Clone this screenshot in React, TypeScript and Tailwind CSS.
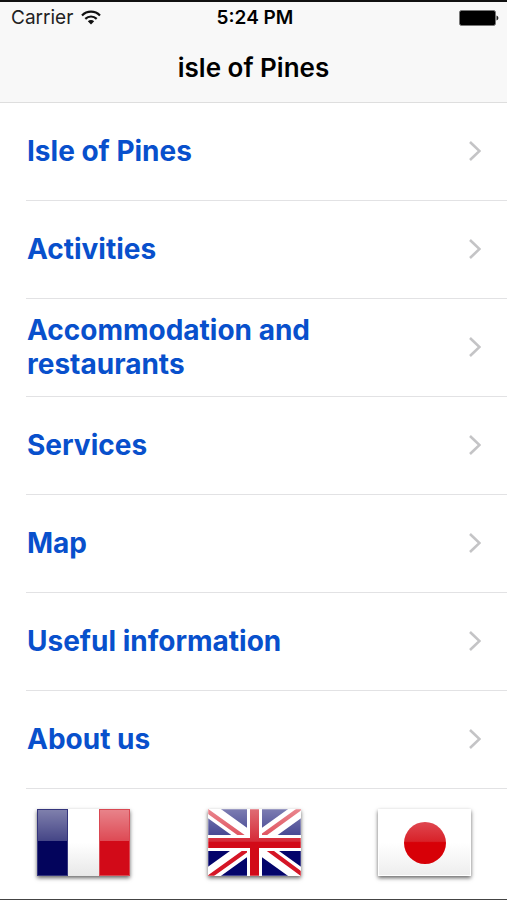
import React from "react";

const items = [
  "Isle of Pines",
  "Activities",
  "Accommodation and restaurants",
  "Services",
  "Map",
  "Useful information",
  "About us",
];

function WifiIcon() {
  return (
    <svg className="h-4 w-5" viewBox="0 0 20 16" fill="none" stroke="#111" strokeWidth="2.2" aria-hidden="true">
      <path d="M1 5.400C6 .3 14 .3 19 5.400" />
      <path d="M4.300 8.900C7.600 5.700 12.400 5.700 15.700 8.900" />
      <path d="M10 14.500 6.800 11.300C8.600 9.700 11.400 9.700 13.200 11.300Z" fill="#111" stroke="none" />
    </svg>
  );
}

function BatteryIcon() {
  return (
    <svg className="h-4 w-10" viewBox="0 0 40 16" aria-hidden="true">
      <rect x="0.500" y="0.500" width="36" height="15" rx="2" fill="#000" stroke="#777" />
      <path d="M37.500 5.500C40 6.500 40 9.500 37.500 10.500Z" fill="#222" />
    </svg>
  );
}

function Chevron() {
  return (
    <svg className="h-5 w-3 shrink-0" viewBox="0 0 12 20" fill="none" stroke="#c4c4c6" strokeWidth="2.6" aria-hidden="true">
      <path d="M1 1 10.500 10 1 19" />
    </svg>
  );
}

function FranceFlag() {
  return (
    <svg className="block h-full w-full" viewBox="0 0 93 67" aria-hidden="true">
      <defs>
        <linearGradient id="frGloss" x2="0" y2="1">
          <stop offset="0" stopColor="#fff" stopOpacity=".5" />
          <stop offset="1" stopColor="#fff" stopOpacity=".26" />
        </linearGradient>
        <linearGradient id="frWhite" x2="0" y2="1">
          <stop offset=".5" stopColor="#fff" />
          <stop offset="1" stopColor="#e8e8e8" />
        </linearGradient>
      </defs>
      <rect width="93" height="67" fill="url(#frWhite)" />
      <rect width="31" height="67" fill="#03045c" />
      <rect x="62" width="31" height="67" fill="#d20a18" />
      <rect width="93" height="32" fill="url(#frGloss)" />
      <rect x=".5" y=".5" width="30" height="66" fill="none" stroke="#34357c" />
      <rect x="62.500" y=".5" width="30" height="66" fill="none" stroke="#d94852" />
    </svg>
  );
}

function UnitedKingdomFlag() {
  return (
    <svg className="block h-full w-full" viewBox="0 0 93 67" aria-hidden="true">
      <defs>
        <linearGradient id="ukGloss" x2="0" y2="1">
          <stop offset="0" stopColor="#fff" stopOpacity=".48" />
          <stop offset="1" stopColor="#fff" stopOpacity=".26" />
        </linearGradient>
        <linearGradient id="ukCross" x2="0" y2="1">
          <stop offset="0" stopColor="#df6c75" />
          <stop offset=".48" stopColor="#d62b38" />
          <stop offset=".5" stopColor="#d20a18" />
          <stop offset="1" stopColor="#d20a18" />
        </linearGradient>
      </defs>
      <rect width="93" height="67" fill="#03046b" />
      <path d="M0 0 93 67M93 0 0 67" stroke="#fff" strokeWidth="15" />
      <path d="M-2 1 40 31M93 -1 50 30M43 38 1 68M57 38 95 66" stroke="#d51626" strokeWidth="4.200" />
      <rect width="93" height="28" fill="url(#ukGloss)" />
      <path d="M39 0H54V26H93V42H54V67H39V42H0V26H39Z" fill="#fff" />
      <path d="M42 0H51V29H93V39H51V67H42V39H0V29H42Z" fill="url(#ukCross)" />
      <rect x=".5" y=".5" width="92" height="66" fill="none" stroke="#fff" strokeOpacity=".25" />
    </svg>
  );
}

function JapanFlag() {
  return (
    <svg className="block h-full w-full" viewBox="0 0 93 67" aria-hidden="true">
      <defs>
        <linearGradient id="jpWhite" x2="0" y2="1">
          <stop offset=".5" stopColor="#fff" />
          <stop offset="1" stopColor="#ededed" />
        </linearGradient>
        <linearGradient id="jpSun" x2="0" y2="1">
          <stop offset="0" stopColor="#df4750" />
          <stop offset=".46" stopColor="#d82229" />
          <stop offset=".49" stopColor="#d70007" />
          <stop offset="1" stopColor="#d70007" />
        </linearGradient>
      </defs>
      <rect width="93" height="67" fill="url(#jpWhite)" />
      <circle cx="47" cy="34" r="21" fill="url(#jpSun)" />
      <rect x=".5" y=".5" width="92" height="66" fill="none" stroke="#fff" />
    </svg>
  );
}

const languages = [
  { name: "Français", Flag: FranceFlag },
  { name: "English", Flag: UnitedKingdomFlag },
  { name: "日本語", Flag: JapanFlag },
];

export default function App() {
  return (
    <div className="flex min-h-screen flex-col border-t-2 border-b border-t-[#111] border-b-[#444] bg-white font-['Inter','Liberation_Sans',sans-serif] text-black">
      <header className="border-b border-[#dedede] bg-[#f8f8f8]">
        <div className="grid grid-cols-3 items-center pt-1 pr-2 pl-[11px] text-[19px] leading-6">
          <div className="flex items-center gap-2 text-[#222]">
            <span>Carrier</span>
            <WifiIcon />
          </div>
          <time className="text-center font-semibold whitespace-nowrap">5:24 PM</time>
          <div className="flex justify-end">
            <BatteryIcon />
          </div>
        </div>
        <h1 className="pt-5 pb-4 text-center text-[26px] leading-9 font-semibold">isle of Pines</h1>
      </header>

      <main>
        <nav aria-label="Guide">
          <ul className="pl-[26px]">
            {items.map((item) => (
              <li key={item} className="border-b border-[#e2e2e4]">
                <a href="#" className="flex min-h-[97px] items-center justify-between pr-[26px] pb-px pl-px">
                  <span className="max-w-[360px] text-[28px] leading-[34px] font-bold text-[#0850cc]">
                    {item}
                  </span>
                  <Chevron />
                </a>
              </li>
            ))}
          </ul>
        </nav>
      </main>

      <footer className="flex justify-between pr-9 pl-[37px] pt-5">
        {languages.map(({ name, Flag }) => (
          <button
            key={name}
            type="button"
            aria-label={name}
            className="h-[67px] w-[93px] shadow-[0_2px_4px_rgba(0,0,0,0.6)]"
          >
            <Flag />
          </button>
        ))}
      </footer>
    </div>
  );
}
